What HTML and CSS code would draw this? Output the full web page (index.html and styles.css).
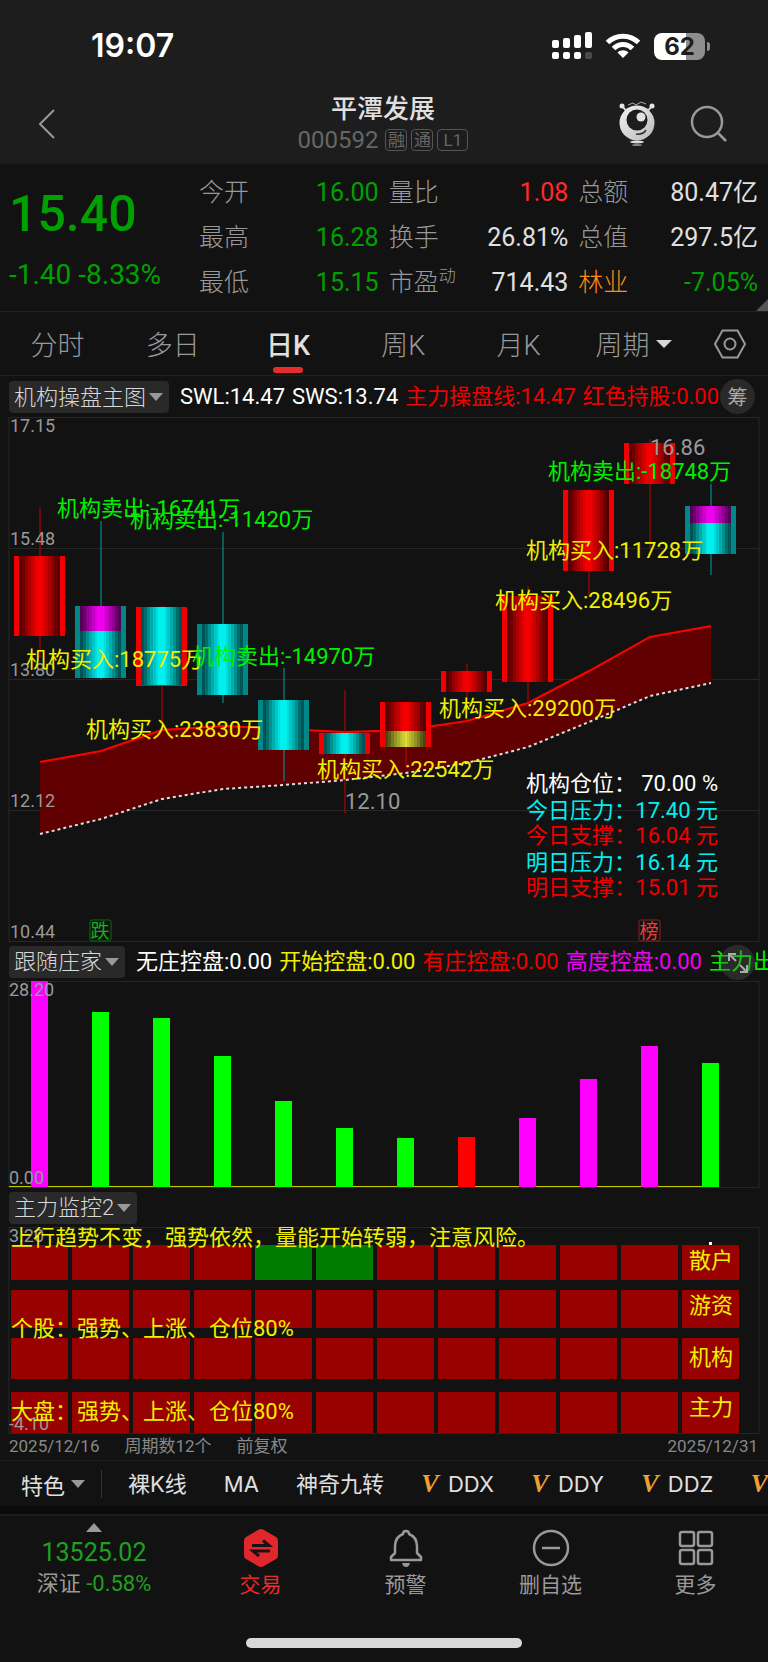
FILE: index.html
```html
<!DOCTYPE html>
<html lang="zh-CN">
<head>
    <meta charset="utf-8">
    <meta name="viewport" content="width=device-width, initial-scale=1">
    <title>平潭发展 000592</title>
    <link rel="stylesheet" href="styles.css">
</head>
<body>
    <header class="header">
        <div class="status-bar">
            <span class="time">19:07</span>
            <div class="status-icons">
                <svg width="40" height="28" viewBox="0 0 40 28" fill="#fff">
                    <rect x="0" y="8" width="7" height="8" rx="2"/>
                    <rect x="11" y="6" width="7" height="10" rx="2"/>
                    <rect x="22" y="3" width="7" height="13" rx="2"/>
                    <rect x="33" y="0" width="7" height="16" rx="2"/>
                    <rect x="0" y="20" width="7" height="7" rx="2"/>
                    <rect x="11" y="20" width="7" height="7" rx="2"/>
                    <rect x="22" y="20" width="7" height="7" rx="2"/>
                    <rect x="33" y="20" width="7" height="7" rx="2" fill="#4a4a4a"/>
                </svg>
                <svg width="36" height="28" viewBox="0 0 36 28" fill="none" stroke="#fff" stroke-width="5">
                    <path d="M2.500 10.500C11 2 25 2 33.500 10.500"/>
                    <path d="M8.500 16.500C14 11 22 11 27.500 16.500"/>
                    <path d="M18 26L12.500 20.500C15.500 17.500 20.500 17.500 23.500 20.500Z" fill="#fff" stroke="none"/>
                </svg>
                <div class="battery"><span>62</span></div>
            </div>
        </div>
        <div class="title-bar">
            <button class="icon-button" aria-label="返回">
                <svg width="18" height="30" viewBox="0 0 18 30" fill="none" stroke="#999" stroke-width="2"><path d="M16 1L2 15L16 29"/></svg>
            </button>
            <div class="title">
                <h1>平潭发展</h1>
                <div class="stock-code"><span class="code">000592</span><span class="tag">融</span><span class="tag">通</span><span class="tag tag-wide">L1</span></div>
            </div>
            <div class="title-actions">
                <button class="icon-button" aria-label="助手">
                    <svg width="36" height="46" viewBox="0 0 36 46">
                        <defs>
                            <linearGradient id="robot" x1="0" y1="0" x2="1" y2="1">
                                <stop offset="0" stop-color="#f4f4f4"/>
                                <stop offset="1" stop-color="#b9b9b9"/>
                            </linearGradient>
                        </defs>
                        <path d="M4 6L8 11M32 6L28 11" stroke="#ddd" stroke-width="2"/>
                        <circle cx="3" cy="5" r="2.500" fill="#e6e6e6"/>
                        <circle cx="33" cy="5" r="2.500" fill="#e6e6e6"/>
                        <path d="M9 4L14 2L17 4L22 1L27 3" fill="none" stroke="#aaa" stroke-width="1"/>
                        <circle cx="18" cy="22" r="17.500" fill="url(#robot)"/>
                        <circle cx="18" cy="19" r="10.500" fill="#1d1d1d"/>
                        <circle cx="22" cy="16" r="4.500" fill="#e2e2e2"/>
                        <path d="M17 33Q24 34 27 29" fill="none" stroke="#333" stroke-width="1.500"/>
                        <ellipse cx="18" cy="41" rx="7" ry="1.500" fill="#ddd"/>
                        <ellipse cx="18" cy="44" rx="5" ry="1" fill="#888"/>
                    </svg>
                </button>
                <button class="icon-button" aria-label="搜索">
                    <svg width="38" height="38" viewBox="0 0 38 38" fill="none" stroke="#999" stroke-width="2.500"><circle cx="17" cy="17" r="15"/><path d="M28 28L36 36"/></svg>
                </button>
            </div>
        </div>
    </header>

    <section class="quote">
        <div class="price">
            <div class="price-now">15.40</div>
            <div class="price-change">-1.40 -8.33%</div>
        </div>
        <dl class="stats">
            <div><dt>今开</dt><dd class="down">16.00</dd></div>
            <div><dt>量比</dt><dd class="up">1.08</dd></div>
            <div><dt>总额</dt><dd>80.47亿</dd></div>
            <div><dt>最高</dt><dd class="down">16.28</dd></div>
            <div><dt>换手</dt><dd>26.81%</dd></div>
            <div><dt>总值</dt><dd>297.5亿</dd></div>
            <div><dt>最低</dt><dd class="down">15.15</dd></div>
            <div><dt>市盈<sup>动</sup></dt><dd>714.43</dd></div>
            <div><dt class="industry">林业</dt><dd class="down">-7.05%</dd></div>
        </dl>
    </section>

    <nav class="tabs">
        <button>分时</button>
        <button>多日</button>
        <button class="active">日K</button>
        <button>周K</button>
        <button>月K</button>
        <button>周期<i class="caret caret-light"></i></button>
        <button class="tab-settings" aria-label="设置">
            <svg width="32" height="30" viewBox="0 0 32 30" fill="none" stroke="#999" stroke-width="2"><path d="M8.500 1.500H23.500L31 15L23.500 28.500H8.500L1 15Z"/><circle cx="16" cy="15" r="5.500"/></svg>
        </button>
    </nav>

    <div class="indicator">
        <div class="picker">
            <select aria-label="主图指标"><option>机构操盘主图</option></select>
        </div>
        <div class="values clipped">
            <span>SWL:14.47</span>
            <span>SWS:13.74</span>
            <span class="c-red">主力操盘线:14.47</span>
            <span class="c-red">红色持股:0.00</span>
        </div>
        <button class="round-button">筹</button>
    </div>

    <svg class="chart" viewBox="0 0 768 525">
        <defs>
            <!-- dark strips that turn a flat candle body into a cylinder -->
            <symbol id="shade" viewBox="0 0 41 10" preserveAspectRatio="none">
                <path d="M0 0H3V10H0ZM38 0H41V10H38Z" opacity=".65"/>
                <path d="M3 0H6V10H3ZM35 0H38V10H35Z" opacity=".55"/>
                <path d="M6 0H9V10H6ZM32 0H35V10H32Z" opacity=".4"/>
                <path d="M9 0H12V10H9ZM29 0H32V10H29Z" opacity=".28"/>
                <path d="M12 0H15V10H12ZM26 0H29V10H26Z" opacity=".17"/>
                <path d="M15 0H17V10H15ZM24 0H26V10H24Z" opacity=".08"/>
            </symbol>
        </defs>

        <g class="grid">
            <rect x="9" y="0.500" width="750" height="524"/>
            <path d="M9 131.500H759M9 262.500H759M9 393.500H759"/>
        </g>

        <path class="band" d="M40 345L101 334L162 313L223 309L284 312L345 315L406 313L467 304L528 286L589 254L650 220L711 209V266L650 279L589 305L528 330L467 346L406 356L345 363L284 368L223 372L162 382L101 402L40 417Z"/>
        <path class="line-main" d="M40 345L101 334L162 313L223 309L284 312L345 315L406 313L467 304L528 286L589 254L650 220L711 209"/>
        <path class="line-dotted" d="M40 417L101 402L162 382L223 372L284 368L345 363L406 356L467 346L528 330L589 305L650 279L711 266"/>

        <g class="candle-up">
            <path d="M40 91V240M162 189V307M345 273V396M467 247V285M528 169V285M589 72V180M650 22V131"/>
            <rect x="14" y="139" width="51" height="80"/>
            <rect x="136" y="190" width="51" height="79"/>
            <rect x="319" y="316" width="51" height="21"/>
            <rect x="380" y="285" width="51" height="45"/>
            <rect x="441" y="254" width="51" height="21"/>
            <rect x="502" y="179" width="51" height="86"/>
            <rect x="563" y="73" width="51" height="81"/>
            <rect x="624" y="26" width="51" height="41"/>
        </g>
        <g class="candle-down">
            <path d="M101 104V262M223 115V286M284 251V364M711 67V158"/>
            <rect x="75" y="189" width="51" height="72"/>
            <rect x="197" y="207" width="51" height="71"/>
            <rect x="258" y="283" width="51" height="50"/>
            <rect x="685" y="89" width="51" height="48"/>
        </g>
        <g class="core-cyan">
            <rect x="80" y="214" width="41" height="47"/>
            <rect x="141" y="190" width="41" height="78"/>
            <rect x="202" y="207" width="41" height="71"/>
            <rect x="263" y="283" width="41" height="50"/>
            <rect x="324" y="316" width="41" height="21"/>
            <rect x="690" y="106" width="41" height="31"/>
        </g>
        <g class="core-magenta">
            <rect x="80" y="189" width="41" height="25"/>
            <rect x="690" y="89" width="41" height="17"/>
        </g>
        <rect class="core-olive" x="385" y="314" width="41" height="16"/>
        <g>
            <use href="#shade" x="19" y="139" width="41" height="80"/>
            <use href="#shade" x="80" y="189" width="41" height="72"/>
            <use href="#shade" x="141" y="190" width="41" height="78"/>
            <use href="#shade" x="202" y="207" width="41" height="71"/>
            <use href="#shade" x="263" y="283" width="41" height="50"/>
            <use href="#shade" x="324" y="316" width="41" height="21"/>
            <use href="#shade" x="385" y="285" width="41" height="45"/>
            <use href="#shade" x="446" y="254" width="41" height="21"/>
            <use href="#shade" x="507" y="179" width="41" height="86"/>
            <use href="#shade" x="568" y="73" width="41" height="81"/>
            <use href="#shade" x="629" y="26" width="41" height="41"/>
            <use href="#shade" x="690" y="89" width="41" height="48"/>
        </g>
        <path d="M406 314V330" stroke="#ee3" stroke-width="1"/>
        <path d="M406 330V350" stroke="#d00000" stroke-width="1"/>

        <g class="axis">
            <text x="10" y="15">17.15</text>
            <text x="10" y="128">15.48</text>
            <text x="10" y="259">13.80</text>
            <text x="10" y="390">12.12</text>
            <text x="10" y="521">10.44</text>
        </g>
        <g class="extreme">
            <text x="650" y="38">16.86</text>
            <text x="345" y="392">12.10</text>
        </g>
        <g class="note c-yellow">
            <text x="26" y="250">机构买入:18775万</text>
            <text x="86" y="320">机构买入:23830万</text>
            <text x="317" y="360">机构买入:22542万</text>
            <text x="439" y="299">机构买入:29200万</text>
            <text x="495" y="191">机构买入:28496万</text>
            <text x="526" y="141">机构买入:11728万</text>
        </g>
        <g class="note c-green">
            <text x="57" y="99">机构卖出:-16741万</text>
            <text x="130" y="110">机构卖出:-11420万</text>
            <text x="192" y="247">机构卖出:-14970万</text>
            <text x="548" y="62">机构卖出:-18748万</text>
        </g>
        <g class="note">
            <text x="526" y="374" class="c-white">机构仓位：</text><text x="718" y="374" class="c-white end">70.00 %</text>
            <text x="526" y="401" class="c-cyan">今日压力：</text><text x="718" y="401" class="c-cyan end">17.40 元</text>
            <text x="526" y="426" class="c-red">今日支撑：</text><text x="718" y="426" class="c-red end">16.04 元</text>
            <text x="526" y="453" class="c-cyan">明日压力：</text><text x="718" y="453" class="c-cyan end">16.14 元</text>
            <text x="526" y="478" class="c-red">明日支撑：</text><text x="718" y="478" class="c-red end">15.01 元</text>
        </g>
        <g class="event event-down"><rect x="90" y="503" width="21" height="21" rx="2"/><text x="100" y="521">跌</text></g>
        <g class="event event-list"><rect x="639" y="503" width="21" height="21" rx="2"/><text x="649" y="521">榜</text></g>
    </svg>

    <div class="indicator">
        <div class="picker">
            <select aria-label="副图指标一"><option>跟随庄家</option></select>
        </div>
        <div class="values">
            <span>无庄控盘:0.00</span>
            <span class="c-yellow">开始控盘:0.00</span>
            <span class="c-red">有庄控盘:0.00</span>
            <span class="c-magenta">高度控盘:0.00</span>
            <span class="c-green">主力出货:0.00</span>
        </div>
        <button class="round-button see-through" aria-label="全屏">
            <svg width="20" height="20" viewBox="0 0 20 20" fill="none" stroke="#aaa" stroke-width="2"><path d="M1 8V1H8M1 1L8 8M19 12V19H12M19 19L12 12"/></svg>
        </button>
    </div>

    <svg class="chart" viewBox="0 0 768 207">
        <g class="grid"><rect x="9" y="0.500" width="750" height="206"/></g>
        <path d="M9 205.500H719" stroke="#c8c800" stroke-width="1"/>
        <g fill="#ff00ff">
            <rect x="31" y="0" width="17" height="206"/>
            <rect x="519" y="137" width="17" height="69"/>
            <rect x="580" y="98" width="17" height="108"/>
            <rect x="641" y="65" width="17" height="141"/>
        </g>
        <g fill="#00ff00">
            <rect x="92" y="31" width="17" height="175"/>
            <rect x="153" y="37" width="17" height="169"/>
            <rect x="214" y="75" width="17" height="131"/>
            <rect x="275" y="120" width="17" height="86"/>
            <rect x="336" y="147" width="17" height="59"/>
            <rect x="397" y="157" width="17" height="49"/>
            <rect x="702" y="82" width="17" height="124"/>
        </g>
        <rect x="458" y="156" width="17" height="50" fill="#ff0000"/>
        <g class="axis">
            <text x="9" y="15">28.20</text>
            <text x="9" y="203">0.00</text>
        </g>
    </svg>

    <div class="indicator">
        <div class="picker">
            <select aria-label="副图指标二"><option>主力监控2</option></select>
        </div>
    </div>

    <svg class="chart" viewBox="0 0 768 207">
        <defs>
            <!-- one cell per trading day -->
            <pattern id="days" x="11" y="0" width="61" height="207" patternUnits="userSpaceOnUse">
                <rect width="57" height="207" fill="#990000"/>
            </pattern>
        </defs>
        <g class="grid"><rect x="9" y="0.500" width="750" height="206"/></g>
        <g fill="url(#days)">
            <rect x="11" y="18" width="729" height="35"/>
            <rect x="11" y="63" width="729" height="38"/>
            <rect x="11" y="111" width="729" height="41"/>
            <rect x="11" y="165" width="729" height="41"/>
        </g>
        <g fill="#007d00">
            <rect x="255" y="18" width="57" height="35"/>
            <rect x="316" y="18" width="57" height="35"/>
        </g>
        <rect x="709" y="15" width="3" height="3" fill="#fff"/>
        <g class="axis">
            <text x="9" y="15">3.20</text>
            <text x="9" y="203">-4.10</text>
        </g>
        <g class="note c-yellow">
            <text x="11" y="18">上行趋势不变，强势依然，量能开始转弱，注意风险。</text>
            <text x="11" y="109">个股：强势、上涨、仓位80%</text>
            <text x="11" y="192">大盘：强势、上涨、仓位80%</text>
            <text x="689" y="41">散户</text>
            <text x="689" y="86">游资</text>
            <text x="689" y="138">机构</text>
            <text x="689" y="188">主力</text>
        </g>
    </svg>

    <div class="dates">
        <span>2025/12/16</span>
        <span>周期数12个</span>
        <span>前复权</span>
        <span class="date-end">2025/12/31</span>
    </div>

    <div class="features">
        <button class="feature-menu">特色<i class="caret"></i></button>
        <div class="feature-list">
            <button>裸K线</button>
            <button>MA</button>
            <button>神奇九转</button>
            <button><b>V</b>DDX</button>
            <button><b>V</b>DDY</button>
            <button><b>V</b>DDZ</button>
            <button><b>V</b></button>
        </div>
    </div>

    <footer class="bottom">
        <nav class="bottom-nav">
            <button class="index-item">
                <i class="caret caret-up"></i>
                <strong>13525.02</strong>
                <span>深证 <em>-0.58%</em></span>
            </button>
            <button class="trade">
                <svg width="36" height="38" viewBox="0 0 36 38">
                    <path d="M15 1Q18 -1 21 1L33 8Q35 9 35 12V26Q35 29 33 30L21 37Q18 39 15 37L3 30Q1 29 1 26V12Q1 9 3 8Z" fill="#e0282c"/>
                    <path d="M9 16.500H26L20 11.500M27 22H10L16 27" fill="none" stroke="#1a1212" stroke-width="3"/>
                </svg>
                <span>交易</span>
            </button>
            <button>
                <svg width="34" height="38" viewBox="0 0 34 38" fill="none" stroke="#999" stroke-width="2.500">
                    <path d="M17 2C19 2 20 3 20 5C25 7 28 11 28 17V24L32 28V31H2V28L6 24V17C6 11 9 7 14 5C14 3 15 2 17 2Z" stroke-linejoin="round"/>
                    <path d="M13 34H21Q20 38 17 38Q14 38 13 34Z" fill="#999" stroke="none"/>
                </svg>
                <span>预警</span>
            </button>
            <button>
                <svg width="38" height="38" viewBox="0 0 38 38" fill="none" stroke="#999" stroke-width="2.500"><circle cx="19" cy="19" r="17"/><path d="M10 19H28"/></svg>
                <span>删自选</span>
            </button>
            <button>
                <svg width="36" height="38" viewBox="0 0 36 38" fill="none" stroke="#999" stroke-width="2.500"><rect x="2" y="3" width="14" height="14" rx="2"/><rect x="20" y="3" width="14" height="14" rx="2"/><rect x="2" y="21" width="14" height="14" rx="2"/><rect x="20" y="21" width="14" height="14" rx="2"/></svg>
                <span>更多</span>
            </button>
        </nav>
        <div class="home-indicator"></div>
    </footer>
</body>
</html>
```
FILE: styles.css
```css
* {
    box-sizing: border-box;
}

body {
    margin: 0;
    background: #121212;
    color: #e0e0e0;
    font-family: Roboto, "Noto Sans CJK SC", sans-serif;
    font-size: 22px;
    overflow-x: hidden;
}

button {
    padding: 0;
    border: none;
    background: none;
    color: inherit;
    font: inherit;
    white-space: nowrap;
    cursor: pointer;
}

svg {
    display: block;
    flex-shrink: 0;
}

.caret {
    display: inline-block;
    border: 7px solid transparent;
    border-top: 8px solid #999;
    border-bottom: none;
}

.caret-light {
    border-top-color: #d8d8d8;
    border-left-width: 8px;
    border-right-width: 8px;
}

.caret-up {
    border: 8px solid transparent;
    border-bottom: 9px solid #999;
    border-top: none;
}

/* header */

.header {
    background: #1d1d1d;
    height: 163px;
}

.status-bar {
    display: flex;
    justify-content: space-between;
    align-items: center;
    height: 92px;
    padding: 0 63px 0 91px;
}

.time {
    font: 600 32px/36px Inter, sans-serif;
    color: #fff;
}

.status-icons {
    display: flex;
    align-items: center;
    gap: 13px;
}

.battery {
    position: relative;
    width: 51px;
    height: 27px;
    border-radius: 8px;
    background: linear-gradient(to right, #fff 62%, #8e8e8e 62%);
    color: #1d1d1d;
    font: 700 24px/27px Inter, sans-serif;
    text-align: center;
}

.battery::after {
    content: "";
    position: absolute;
    left: 53px;
    top: 9px;
    width: 3px;
    height: 9px;
    border-radius: 0 3px 3px 0;
    background: #8e8e8e;
}

.title-bar {
    display: grid;
    grid-template-columns: 1fr auto 1fr;
    align-items: center;
    height: 64px;
    padding: 0 40px 0 38px;
}

.icon-button {
    justify-self: start;
}

.title {
    text-align: center;
}

.title h1 {
    margin: 0;
    font-size: 26px;
    line-height: 32px;
    font-weight: 500;
}

.stock-code {
    display: flex;
    align-items: center;
    gap: 4px;
    font-size: 24px;
    line-height: 30px;
    color: #666;
}

.code {
    margin-right: 3px;
}

.tag {
    width: 22px;
    height: 22px;
    border: 1px solid #555;
    border-radius: 4px;
    font-size: 17px;
    line-height: 20px;
    text-align: center;
}

.tag-wide {
    width: 31px;
}

.title-actions {
    display: flex;
    justify-content: flex-end;
    align-items: center;
    gap: 35px;
}

/* quote */

.quote {
    position: relative;
    display: flex;
    height: 149px;
    padding: 6px 10px 0 9px;
    border-bottom: 1px solid #222;
    border-top: 1px solid #191919;
}

.quote::after {
    content: "";
    position: absolute;
    right: 0;
    bottom: 0;
    border-left: 12px solid transparent;
    border-bottom: 12px solid #555;
}

.price {
    width: 190px;
    color: #00a000;
}

.price-now {
    margin-top: 14px;
    font-size: 50px;
    line-height: 60px;
    font-weight: 500;
}

.price-change {
    margin-top: 16px;
    font-size: 28px;
    line-height: 30px;
}

.stats {
    flex: 1;
    display: grid;
    grid-template-columns: repeat(3, 1fr);
    column-gap: 10px;
    grid-auto-rows: 45px;
    margin: 0;
    font-size: 25px;
    line-height: 45px;
}

.stats div {
    display: flex;
    justify-content: space-between;
}

.stats dt {
    color: #999;
    font-weight: 300;
}

.stats dd {
    margin: 0;
}

.stats sup {
    font-size: 17px;
    line-height: 17px;
}

.stats .industry {
    color: #ff8c1a;
}

.up {
    color: #ff2a2a;
}

.down {
    color: #00a000;
}

/* period tabs */

.tabs {
    display: flex;
    height: 64px;
    border-bottom: 1px solid #222;
}

.tabs button {
    position: relative;
    flex: 3;
    display: flex;
    align-items: center;
    justify-content: center;
    gap: 6px;
    color: #999;
    font-size: 27px;
    font-weight: 300;
}

.tabs .tab-settings {
    flex: 2;
}

.tabs .active {
    color: #e0e0e0;
    font-weight: 500;
}

.tabs .active::after {
    content: "";
    position: absolute;
    bottom: 2px;
    width: 30px;
    height: 6px;
    border-radius: 3px;
    background: #e82c2c;
}

/* indicator headings */

.indicator {
    position: relative;
    display: flex;
    align-items: center;
    gap: 11px;
    height: 39px;
    padding-left: 9px;
    overflow: hidden;
}

.tabs + .indicator {
    height: 42px;
    margin-bottom: -1px;
}

.picker {
    position: relative;
    flex-shrink: 0;
}

.picker select {
    display: block;
    appearance: none;
    height: 32px;
    padding: 0 22px 0 5px;
    border: none;
    border-radius: 4px;
    background: #292929;
    color: #d8d8d8;
    font: inherit;
    font-weight: 300;
}

.picker::after {
    content: "";
    position: absolute;
    right: 6px;
    top: 12px;
    border: 7px solid transparent;
    border-top: 8px solid #999;
    border-bottom: none;
    pointer-events: none;
}

.values {
    display: flex;
    align-items: baseline;
    gap: 7px;
    flex: 1;
    overflow: hidden;
    white-space: nowrap;
    color: #fff;
    line-height: 28px;
}

.values.clipped {
    margin-right: 48px;
}

.round-button {
    position: absolute;
    right: 13px;
    top: 3px;
    display: flex;
    align-items: center;
    justify-content: center;
    width: 35px;
    height: 35px;
    border-radius: 50%;
    background: #292929;
    color: #aaa;
    font-size: 20px;
}

.round-button.see-through {
    background: rgba(90, 90, 90, 0.35);
}

/* charts */

.chart {
    width: 100%;
    height: auto;
}

.grid {
    fill: none;
    stroke: #262626;
    stroke-width: 1;
}

.axis {
    fill: #999;
    font-size: 18px;
}

.extreme {
    fill: #999;
    font-size: 22px;
}

.note {
    font-size: 22px;
}

.end {
    text-anchor: end;
}

.band {
    fill: #610000;
}

.line-main {
    fill: none;
    stroke: #ff0000;
    stroke-width: 2;
}

.line-dotted {
    fill: none;
    stroke: #ddd;
    stroke-width: 2;
    stroke-dasharray: 3 3;
}

.candle-up {
    fill: #f00000;
    stroke: none;
}

.candle-up path {
    stroke: #c80000;
    stroke-width: 1;
}

.candle-down {
    fill: #008787;
}

.candle-down path {
    stroke: #00a0a0;
    stroke-width: 1;
}

.core-cyan {
    fill: #00f0f0;
}

.core-magenta {
    fill: #f000f0;
}

.core-olive {
    fill: #cccc33;
}

.event {
    fill: none;
    font-size: 19px;
    text-anchor: middle;
}

.event-down {
    stroke: #0a6a12;
}

.event-down text {
    fill: #14b01e;
    stroke: none;
}

.event-list {
    stroke: #8c2024;
}

.event-list text {
    fill: #f03c3c;
    stroke: none;
}

.c-white {
    color: #fff;
    fill: #fff;
}

.c-red {
    color: #f00000;
    fill: #f00000;
}

.c-yellow {
    color: #f0f000;
    fill: #f0f000;
}

.c-green {
    color: #00f000;
    fill: #00f000;
}

.c-cyan {
    color: #00f0f0;
    fill: #00f0f0;
}

.c-magenta {
    color: #f000f0;
    fill: #f000f0;
}

/* below the charts */

.dates {
    display: flex;
    gap: 25px;
    height: 26px;
    padding: 0 10px 0 9px;
    color: #888;
    font-size: 17px;
    line-height: 24px;
}

.date-end {
    margin-left: auto;
}

.features {
    display: flex;
    align-items: center;
    height: 46px;
    border-top: 1px solid #1c1c1c;
    overflow: hidden;
}

.feature-menu {
    display: flex;
    align-items: center;
    gap: 6px;
    height: 28px;
    padding: 0 16px 0 21px;
    border-right: 1px solid #333;
}

.feature-list {
    display: flex;
    align-items: baseline;
    gap: 37px;
    padding-left: 26px;
    font-family: Inter, "Noto Sans CJK SC", sans-serif;
    line-height: 30px;
}

.feature-list b {
    display: inline-block;
    width: 18px;
    margin-right: 9px;
    color: #f0a030;
    font: italic 700 26px/28px "Liberation Serif", serif;
}

/* bottom bar */

.bottom {
    border-top: 8px solid #0a0a0a;
}

.bottom-nav {
    display: flex;
    height: 110px;
    border-top: 2px solid #1c1c1c;
}

.bottom-nav button {
    flex: 145;
    display: flex;
    flex-direction: column;
    align-items: center;
    gap: 4px;
    padding-top: 13px;
    color: #999;
    font-size: 21px;
    line-height: 28px;
}

.bottom-nav .index-item {
    flex: 188;
    gap: 0;
    padding-top: 7px;
    font-size: 22px;
}

.index-item strong {
    margin: 7px 0 3px;
    color: #1fa01f;
    font-size: 25px;
    line-height: 28px;
    font-weight: 400;
}

.index-item em {
    color: #1fa01f;
    font-style: normal;
}

.bottom-nav .trade {
    color: #e82c2c;
}

.home-indicator {
    width: 36%;
    height: 10px;
    margin: 14px auto;
    border-radius: 5px;
    background: #d9d9d9;
}
```
